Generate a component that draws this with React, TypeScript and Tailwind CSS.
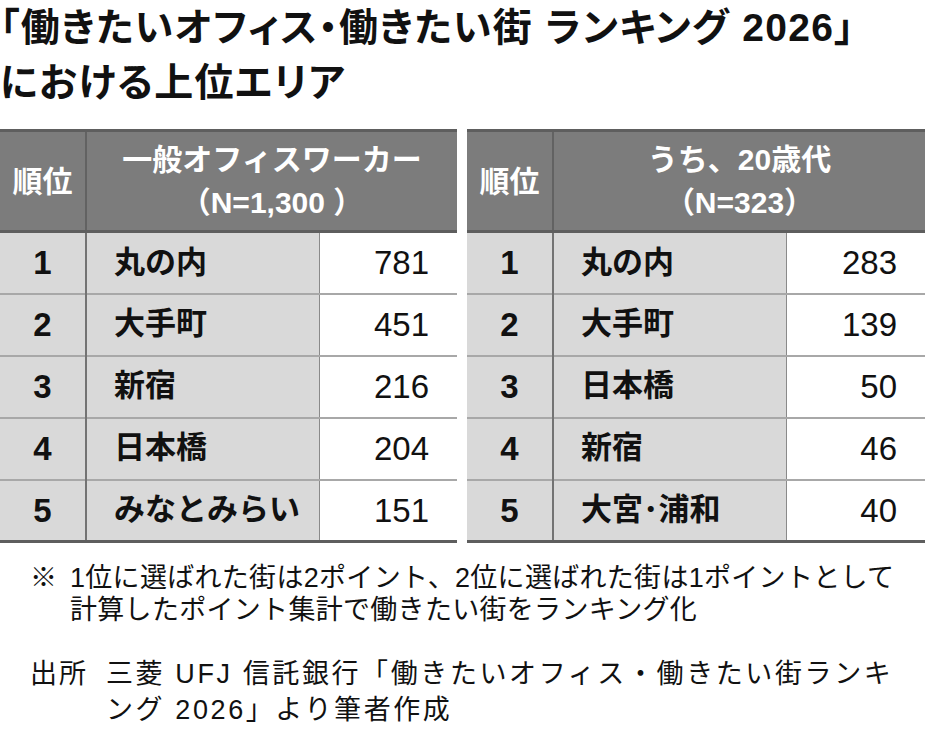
const rowsAll = [
  { rank: 1, name: '丸の内', count: 781 },
  { rank: 2, name: '大手町', count: 451 },
  { rank: 3, name: '新宿', count: 216 },
  { rank: 4, name: '日本橋', count: 204 },
  { rank: 5, name: 'みなとみらい', count: 151 },
]

const rowsYoung = [
  { rank: 1, name: '丸の内', count: 283 },
  { rank: 2, name: '大手町', count: 139 },
  { rank: 3, name: '日本橋', count: 50 },
  { rank: 4, name: '新宿', count: 46 },
  { rank: 5, name: '大宮･浦和', count: 40 },
]

type Row = { rank: number; name: string; count: number }

function RankTable({ title, sample, rows }: { title: string; sample: string; rows: Row[] }) {
  return (
    <table className="w-full table-fixed border-collapse">
      <colgroup>
        <col className="w-[86px]" />
        <col className="w-[233px]" />
        <col />
      </colgroup>
      <thead>
        <tr className="h-[101px] border-t-[3px] border-b-[3px] border-[#5e5e5e] bg-[#7c7c7c] text-white">
          <th className="border-r-2 border-[#626262] text-[30px] font-bold">順位</th>
          <th colSpan={2} className="text-[30px] font-bold leading-[43px]">
            <div>{title}</div>
            <div>{sample}</div>
          </th>
        </tr>
      </thead>
      <tbody className="text-[#111]">
        {rows.map((row, i) => (
          <tr
            key={row.rank}
            className={
              i === rows.length - 1
                ? 'h-[62px] border-b-[3px] border-[#5e5e5e]'
                : 'h-[62px] border-b-2 border-[#a8a8a8]'
            }
          >
            <td className="border-r-2 border-[#737373] bg-[#d9d9d9] text-center text-[33px] font-bold">
              {row.rank}
            </td>
            <td className="border-r border-[#8a8a8a] bg-[#d9d9d9] pl-[27px] text-[31px] font-bold">
              {row.name}
            </td>
            <td className="bg-white pr-[28px] text-right text-[33px]">{row.count}</td>
          </tr>
        ))}
      </tbody>
    </table>
  )
}

export default function App() {
  return (
    <div className="h-[740px] w-[930px] overflow-hidden bg-white font-['Liberation_Sans','Noto_Sans_CJK_JP',sans-serif] text-[#111]">
      <h1 className="text-[39px] font-bold leading-[55px] tracking-[1.3px] [font-feature-settings:'palt']">
        <div>「働きたいオフィス・働きたい街 ランキング 2026」</div>
        <div>における上位エリア</div>
      </h1>

      <div className="mt-[19px] flex gap-[10px] pr-[5px]">
        <div className="w-[457px]">
          <RankTable title="一般オフィスワーカー" sample="（N=1,300 ）" rows={rowsAll} />
        </div>
        <div className="flex-1">
          <RankTable title="うち、20歳代" sample="（N=323）" rows={rowsYoung} />
        </div>
      </div>

      <div className="mt-[19px] pl-[30px] text-[27px] leading-[32px]">
        <div className="flex">
          <span className="w-[40px] shrink-0">※</span>
          <div className="tracking-[0.3px]">
            <div>1位に選ばれた街は2ポイント、2位に選ばれた街は1ポイントとして</div>
            <div>計算したポイント集計で働きたい街をランキング化</div>
          </div>
        </div>
        <div className="mt-[30px] flex leading-[36px]">
          <span className="w-[76px] shrink-0 tracking-[2px]">出所</span>
          <div className="tracking-[2.6px]">
            <div>三菱 UFJ 信託銀行「働きたいオフィス・働きたい街ランキ</div>
            <div>ング 2026」より筆者作成</div>
          </div>
        </div>
      </div>
    </div>
  )
}
